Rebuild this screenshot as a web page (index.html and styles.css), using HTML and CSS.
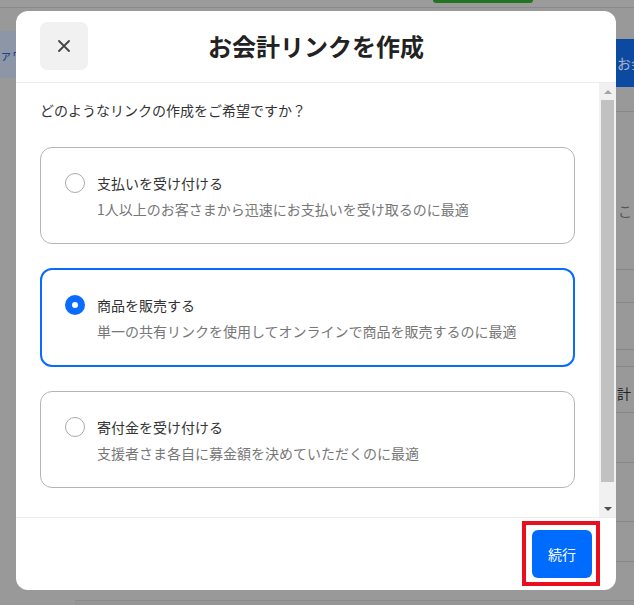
FILE: index.html
```html
<!DOCTYPE html>
<html lang="ja">
<head>
<meta charset="utf-8">
<title>お会計リンクを作成</title>
<link rel="stylesheet" href="styles.css">
</head>
<body>
<div class="page">
  <div class="topbar"><div class="green-btn"></div></div>
  <div class="main">
    <div class="left-col">
      <div class="left-tab">ァウント</div>
    </div>
    <div class="right-col">
      <div class="right-tab">お会計</div>
      <div class="rrow r1"></div>
      <div class="rrow r2"><span class="bg-text">ここ</span></div>
      <div class="rrow r3"></div>
      <div class="rrow r4"></div>
      <div class="rrow r5"></div>
      <div class="rrow r6"><span class="bg-text dark">計</span></div>
      <div class="rrow r7"></div>
      <div class="rrow r8"></div>
      <div class="rrow r9"></div>
    </div>
  </div>
  <div class="bottom-strip"></div>

  <div class="modal" role="dialog" aria-labelledby="modal-title">
    <div class="modal-header">
      <button class="close-btn" aria-label="閉じる">
        <svg width="12" height="12" viewBox="0 0 12 12"><path d="M1 1L11 11M11 1L1 11" stroke="#444" stroke-width="1.8" stroke-linecap="round"/></svg>
      </button>
      <h1 id="modal-title" class="modal-title">お会計リンクを作成</h1>
      <span></span>
    </div>
    <div class="modal-body">
      <div class="content">
        <p class="question">どのようなリンクの作成をご希望ですか？</p>
        <div class="cards">
          <div class="card">
            <span class="radio"></span>
            <div class="card-text">
              <div class="card-title">支払いを受け付ける</div>
              <div class="card-desc">1人以上のお客さまから迅速にお支払いを受け取るのに最適</div>
            </div>
          </div>
          <div class="card selected">
            <span class="radio on"></span>
            <div class="card-text">
              <div class="card-title">商品を販売する</div>
              <div class="card-desc">単一の共有リンクを使用してオンラインで商品を販売するのに最適</div>
            </div>
          </div>
          <div class="card">
            <span class="radio"></span>
            <div class="card-text">
              <div class="card-title">寄付金を受け付ける</div>
              <div class="card-desc">支援者さま各自に募金額を決めていただくのに最適</div>
            </div>
          </div>
        </div>
      </div>
      <div class="scrollbar">
        <div class="sb-btn"><span class="tri-up"></span></div>
        <div class="sb-thumb"></div>
        <div class="sb-space"></div>
        <div class="sb-btn"><span class="tri-down"></span></div>
      </div>
    </div>
    <div class="modal-footer">
      <div class="highlight">
        <button class="primary-btn">続行</button>
      </div>
    </div>
  </div>
</div>
</body>
</html>
```
FILE: styles.css
```css
* { box-sizing: border-box; }
html, body { margin: 0; padding: 0; }
body {
  font-family: "Noto Sans CJK JP", "Noto Sans", sans-serif;
  background: #999;
}
.page {
  position: relative;
  width: 634px;
  height: 605px;
  background: #999999;
  overflow: hidden;
  display: flex;
  flex-direction: column;
}
.topbar {
  height: 8px;
  flex: none;
  background: #9b9b9b;
  border-bottom: 1px solid #8a8a8a;
  padding-left: 433px;
}
.green-btn {
  width: 100px;
  height: 3px;
  background: #237323;
  border-radius: 0 0 4px 4px;
}
.main {
  flex: 1;
  display: flex;
  justify-content: space-between;
}
.left-col {
  width: 60px;
  padding-top: 23px;
}
.left-tab {
  height: 47px;
  background: #8d96a6;
  color: #1f3f8c;
  font-size: 12px;
  line-height: 47px;
  white-space: nowrap;
  overflow: hidden;
  padding-left: 0;
}
.right-col {
  width: 18px;
  padding-top: 31px;
}
.right-tab {
  height: 48px;
  background: #0c4aa2;
  color: #a9b3c8;
  font-size: 14px;
  line-height: 48px;
  white-space: nowrap;
  overflow: hidden;
  padding-left: 1px;
}
.rrow {
  border-bottom: 1px solid #878787;
  overflow: hidden;
  white-space: nowrap;
}
.r1 { height: 25px; }
.r2 { height: 158px; padding-top: 86px; }
.r3 { height: 33px; }
.r4 { height: 47px; }
.r5 { height: 17px; }
.r6 { height: 46px; padding-top: 13px; }
.r7 { height: 50px; }
.r8 { height: 59px; }
.r9 { height: 40px; }
.bg-text {
  font-size: 14px;
  line-height: 18px;
  color: #4f5563;
  padding-left: 2px;
}
.bg-text.dark { color: #222; padding-left: 1px; }
.bottom-strip {
  height: 5px;
  flex: none;
  margin-left: 75px;
  border-top: 1px solid #8b8b8b;
  background: #969696;
}

/* Modal */
.modal {
  position: absolute;
  left: 16px;
  top: 11px;
  width: 600px;
  height: 579px;
  background: #fff;
  border-radius: 12px;
  overflow: hidden;
  display: flex;
  flex-direction: column;
}
.modal-header {
  height: 72px;
  flex: none;
  border-bottom: 1px solid #ececec;
  display: grid;
  grid-template-columns: 48px 1fr 48px;
  align-items: center;
  padding: 0 24px;
}
.close-btn {
  width: 48px;
  height: 48px;
  border: none;
  border-radius: 7px;
  background: #f1f1f1;
  display: grid;
  place-items: center;
  padding: 0;
  margin-top: -1px;
}
.close-btn svg { display: block; }
.modal-title {
  margin: 0;
  text-align: center;
  font-size: 24px;
  line-height: 32px;
  font-weight: 700;
  color: #222;
  margin-top: -1px;
}
.modal-body {
  height: 434px;
  flex: none;
  display: flex;
}
.content {
  flex: 1;
  padding: 17px 24px 0 24px;
  overflow: hidden;
}
.question {
  margin: 0 0 27px 0;
  font-size: 14px;
  line-height: 20px;
  color: #333;
}
.cards {
  display: flex;
  flex-direction: column;
  gap: 24px;
}
.card {
  border: 1px solid #b5b5b5;
  border-radius: 12px;
  padding: 25px 24px 24px 24px;
  display: flex;
  gap: 12px;
}
.card.selected {
  border: 2px solid #0a6cff;
  padding: 25px 23px 24px 23px;
}
.radio {
  width: 20px;
  height: 20px;
  flex: none;
  border-radius: 50%;
  border: 1.5px solid #ababab;
}
.radio.on {
  background: #0a6cff;
  border: none;
  display: grid;
  place-items: center;
}
.radio.on::after {
  content: "";
  width: 6px;
  height: 6px;
  border-radius: 50%;
  background: #fff;
}
.card-title {
  font-size: 14px;
  line-height: 20px;
  color: #333;
}
.card-desc {
  margin-top: 6px;
  font-size: 14px;
  line-height: 20px;
  color: #777;
}

/* Fake scrollbar */
.scrollbar {
  width: 17px;
  flex: none;
  background: #f1f1f1;
  display: flex;
  flex-direction: column;
}
.sb-btn {
  height: 17px;
  flex: none;
  display: grid;
  place-items: center;
}
.tri-up {
  width: 0; height: 0;
  border-left: 4px solid transparent;
  border-right: 4px solid transparent;
  border-bottom: 4px solid #a3a3a3;
}
.tri-down {
  width: 0; height: 0;
  border-left: 4px solid transparent;
  border-right: 4px solid transparent;
  border-top: 4px solid #505050;
}
.sb-thumb {
  height: 382px;
  flex: none;
  margin: 0 2px;
  background: #c1c1c1;
}
.sb-space { flex: 1; }

/* Footer */
.modal-footer {
  flex: 1;
  border-top: 1px solid #ececec;
  display: flex;
  justify-content: flex-end;
  align-items: flex-start;
  padding: 3px 16px 0 0;
}
.highlight {
  border: 4px solid #e8101e;
  padding: 5px 4px 4px 6px;
}
.primary-btn {
  display: block;
  width: 60px;
  height: 48px;
  border: none;
  border-radius: 6px;
  background: #006cff;
  color: #fff;
  font-family: "Noto Sans CJK JP", sans-serif;
  font-size: 14px;
  padding: 0;
}
```
